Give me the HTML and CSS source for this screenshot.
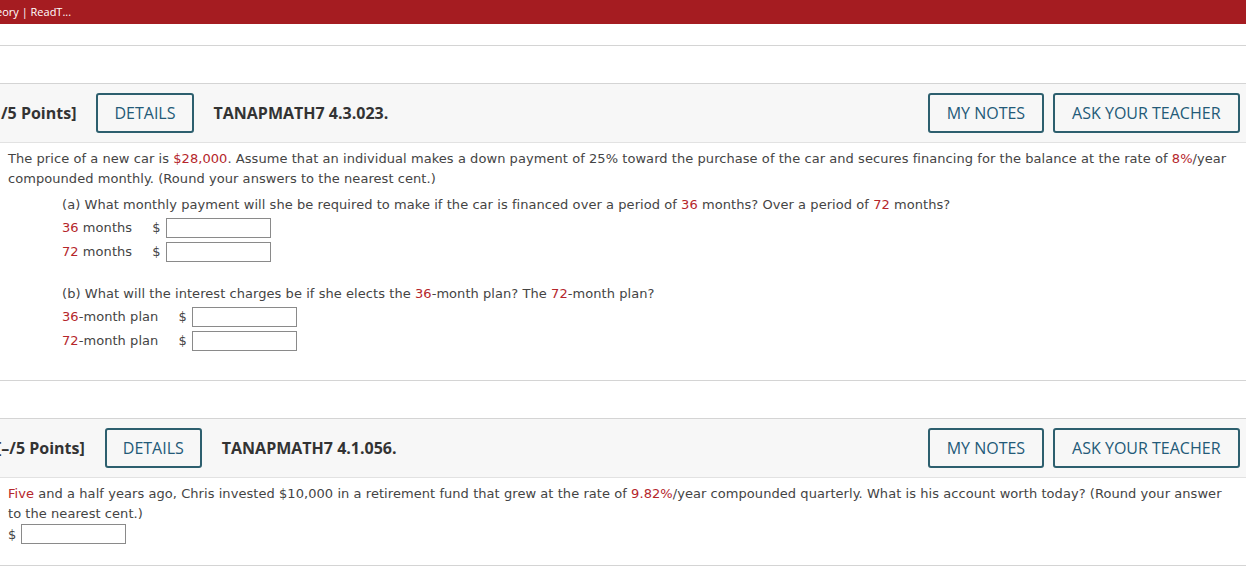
FILE: index.html
```html
<!DOCTYPE html>
<html>
<head>
<meta charset="utf-8">
<link rel="stylesheet" href="styles.css">
</head>
<body>
<div class="topbar"><span class="toptitle">eory | ReadT...</span></div>
<div class="prevend"></div>

<section class="question">
  <div class="qhead">
    <span class="points first">/5 Points]</span>
    <button class="btn">DETAILS</button>
    <span class="qid">TANAPMATH7 4.3.023.</span>
    <span class="spacer"></span>
    <div class="actions">
      <button class="btn">MY NOTES</button>
      <button class="btn wide">ASK YOUR TEACHER</button>
    </div>
  </div>
  <div class="qbody">
    <p class="txt">The price of a new car is <span class="red">$28,000</span>. Assume that an individual makes a down payment of 25% toward the purchase of the car and secures financing for the balance at the rate of <span class="red">8%</span>/year compounded monthly. (Round your answers to the nearest cent.)</p>
    <div class="part">
      <p class="txt">(a) What monthly payment will she be required to make if the car is financed over a period of <span class="red">36</span> months? Over a period of <span class="red">72</span> months?</p>
      <table class="ans">
        <tr><td class="lbl"><span class="red">36</span> months</td><td class="dol">$</td><td><span class="inp"></span></td></tr>
        <tr><td class="lbl"><span class="red">72</span> months</td><td class="dol">$</td><td><span class="inp"></span></td></tr>
      </table>
    </div>
    <div class="part partb">
      <p class="txt">(b) What will the interest charges be if she elects the <span class="red">36</span>-month plan? The <span class="red">72</span>-month plan?</p>
      <table class="ans">
        <tr><td class="lbl"><span class="red">36</span>-month plan</td><td class="dol">$</td><td><span class="inp"></span></td></tr>
        <tr><td class="lbl"><span class="red">72</span>-month plan</td><td class="dol">$</td><td><span class="inp"></span></td></tr>
      </table>
    </div>
  </div>
</section>

<section class="question q2">
  <div class="qhead">
    <span class="points second">[–/5 Points]</span>
    <button class="btn">DETAILS</button>
    <span class="qid">TANAPMATH7 4.1.056.</span>
    <span class="spacer"></span>
    <div class="actions">
      <button class="btn">MY NOTES</button>
      <button class="btn wide">ASK YOUR TEACHER</button>
    </div>
  </div>
  <div class="qbody q2body">
    <p class="txt"><span class="red">Five</span> and a half years ago, Chris invested $10,000 in a retirement fund that grew at the rate of <span class="red">9.82%</span>/year compounded quarterly. What is his account worth today? (Round your answer to the nearest cent.)</p>
    <div class="single"><span class="dol">$</span><span class="inp"></span></div>
  </div>
</section>
</body>
</html>
```
FILE: styles.css
```css
body {
  margin: 0;
  background: #fff;
  overflow: hidden;
}
.topbar {
  height: 24px;
  background: #a51c21;
  display: flex;
  align-items: center;
  overflow: hidden;
}
.toptitle {
  font-family: "Open Sans", sans-serif;
  font-size: 11px;
  color: #fff;
  margin-left: -4px;
  margin-top: -1px;
  white-space: nowrap;
}
.prevend {
  height: 21px;
  border-bottom: 1px solid #d4d4d4;
  margin-bottom: 37px;
}
.question {
  border-top: 1px solid #d4d4d4;
  border-bottom: 1px solid #d4d4d4;
}
.q2 {
  margin-top: 37px;
}
.qhead {
  height: 59px;
  box-sizing: border-box;
  background: #f7f7f7;
  border-bottom: 1px solid #e2e2e2;
  display: flex;
  align-items: center;
  gap: 20px;
  padding-right: 6px;
  font-family: "Open Sans", sans-serif;
  white-space: nowrap;
  overflow: hidden;
}
.points {
  font-weight: 700;
  font-size: 16px;
  color: #333;
}
.points.first { margin-left: 1px; }
.points.second { margin-left: -4px; }
.qid {
  font-weight: 700;
  font-size: 16px;
  color: #333;
}
.spacer { flex: 1; }
.actions {
  display: flex;
  gap: 9px;
}
.btn {
  font-family: "Open Sans", sans-serif;
  font-size: 16px;
  color: #235a78;
  background: #f7f7f7;
  border: 2px solid #2d5f6e;
  border-radius: 3px;
  height: 40px;
  padding: 0 16px;
  margin: 0;
}
.actions .btn { padding: 0 16.5px; }
.actions .btn.wide { padding: 0 17.5px; }
.qbody {
  padding: 6px 8px 27px 8px;
  font-family: "DejaVu Sans", Verdana, sans-serif;
  font-size: 13px;
  letter-spacing: 0.06px;
  color: #444;
}
.q2body {
  padding-bottom: 21px;
}
.txt {
  margin: 0;
  line-height: 20px;
}
.red { color: #b5262b; }
.part {
  margin-left: 54px;
  margin-top: 6px;
}
.partb { margin-top: 20px; }
.ans {
  border-collapse: collapse;
  margin-top: 1px;
}
.ans tr { height: 24px; }
.ans td {
  padding: 0;
  height: 24px;
  line-height: 20px;
  vertical-align: middle;
}
.ans td.lbl { padding-right: 20px; }
.ans td.dol { padding-right: 5px; }
.inp {
  display: block;
  width: 103px;
  height: 18px;
  border: 1px solid #8a8a8a;
  background: #fff;
}
.single {
  display: flex;
  align-items: center;
  gap: 5px;
  height: 20px;
}
```
